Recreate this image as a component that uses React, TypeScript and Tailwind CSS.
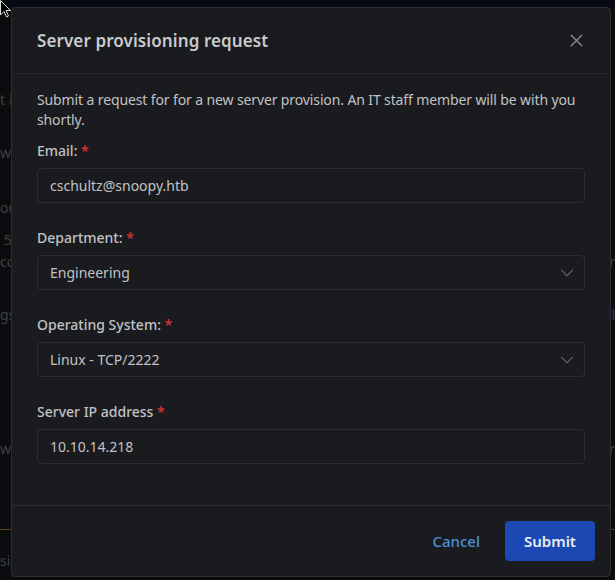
import React from 'react';
import { X, ChevronDown } from 'lucide-react';

const Label = ({ text, colon = true }: { text: string; colon?: boolean }) => (
  <label className="mb-[7px] block text-[14px] font-medium leading-[21px] text-[#c1c2c5]">
    {text}
    {colon ? ':' : ''} <span className="text-[#e03131]">*</span>
  </label>
);

const Field = ({ value, select }: { value: string; select?: boolean }) => (
  <div className="flex h-[35px] items-center justify-between rounded-[4px] border border-[#2c2e33] bg-[#1a1b1e] pl-[12px] pr-[6px] text-[14px] text-[#c1c2c5]">
    <span>{value}</span>
    {select && <ChevronDown size={22} strokeWidth={1.2} className="text-[#5c5f66]" />}
  </div>
);

export default function App() {
  return (
    <div
      className="relative h-[580px] w-[615px] overflow-hidden bg-[#0b0c0e] text-[14px]"
      style={{ fontFamily: '"Noto Sans", "Open Sans", sans-serif' }}
    >
      {/* page behind the modal */}
      <div className="h-[7px] bg-[#070a13]" />
      <div className="flex flex-col text-[14px] leading-[20px] text-[#3f4043]">
        <div className="mt-[83px] flex justify-between"><span>t i</span><span /></div>
        <div className="mt-[33px] flex justify-between"><span>wa</span><span /></div>
        <div className="mt-[35px] flex justify-between"><span>ou</span><span /></div>
        <div className="mt-[12px] flex justify-between"><span>&nbsp;5</span><span /></div>
        <div className="mt-[2px] flex justify-between"><span>co</span><span>r</span></div>
        <div className="mt-[33px] flex justify-between"><span>gs</span><span>l</span></div>
        <div className="mt-[114px] flex justify-between"><span>wc</span><span>r</span></div>
        <div className="mt-[70px] h-px bg-[#5a3f12]" />
        <div className="mt-[21px] flex justify-between"><span>sib</span><span /></div>
      </div>

      {/* cursor */}
      <svg className="absolute left-0 top-0" width="12" height="20" viewBox="0 0 12 20">
        <path d="M0.5 0.5 L0.5 15 L4 11.5 L6.5 17 L8.5 16 L6 10.5 L10.5 10.5 Z" fill="#000" stroke="#ddd" strokeWidth="1" />
      </svg>

      {/* modal */}
      <div className="absolute left-[11px] top-[7px] flex h-[570px] w-[600px] flex-col rounded-[4px] border border-[#2c2e33] bg-[#1a1b1e]">
        <div className="flex h-[66px] items-center justify-between border-b border-[#25262b] pl-[25px] pr-[23px]">
          <h2 className="text-[17px] font-semibold tracking-[0.1px] text-[#c9cacd]">Server provisioning request</h2>
          <X size={21} strokeWidth={1.4} className="text-[#909296]" />
        </div>

        <div className="flex-1 px-[25px] pt-[16px]">
          <p className="text-[14px] leading-[20px] tracking-[-0.12px] text-[#c1c2c5]">
            Submit a request for for a new server provision. An IT staff member will be with you shortly.
          </p>
          <div className="mt-[10px] flex flex-col gap-[24px]">
            <div>
              <Label text="Email" />
              <Field value="cschultz@snoopy.htb" />
            </div>
            <div>
              <Label text="Department" />
              <Field value="Engineering" select />
            </div>
            <div>
              <Label text="Operating System" />
              <Field value="Linux - TCP/2222" select />
            </div>
            <div>
              <Label text="Server IP address" colon={false} />
              <Field value="10.10.14.218" />
            </div>
          </div>
        </div>

        <div className="flex items-center justify-end gap-[8px] border-t border-[#2c2e33] px-[15px] py-[15px]">
          <button className="h-[40px] px-[17px] text-[15px] font-medium text-[#4a90d9]">Cancel</button>
          <button className="h-[40px] w-[90px] rounded-[4px] bg-[#1b48b2] text-[15px] font-semibold text-[#e9ecef]">
            Submit
          </button>
        </div>
      </div>
    </div>
  );
}
